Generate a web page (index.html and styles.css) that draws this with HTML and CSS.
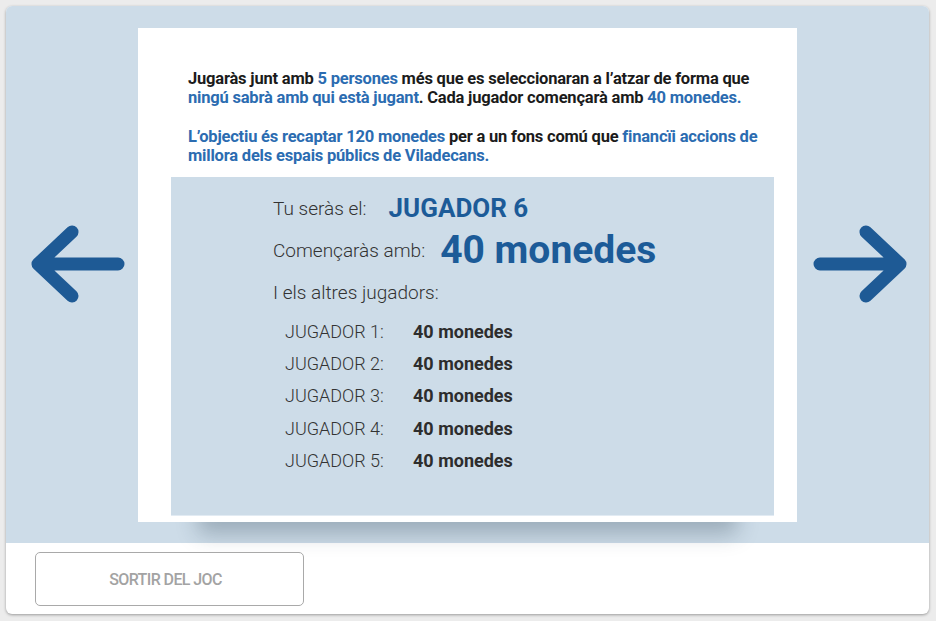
FILE: index.html
```html
<!DOCTYPE html>
<html lang="ca">
<head>
<meta charset="utf-8">
<title>Joc</title>
<link rel="stylesheet" href="styles.css">
</head>
<body>
<div class="card">
  <div class="stage">
    <button class="nav nav-prev" aria-label="Anterior">
      <svg width="104" height="90" viewBox="0 0 104 90"><path d="M12 44 H92 M12 44 L46 12 M12 44 L46 76" fill="none" stroke="#1e5a95" stroke-width="13" stroke-linecap="round" stroke-linejoin="round"/></svg>
    </button>
    <div class="panel">
      <p class="intro">Jugaràs junt amb <span class="hl">5 persones</span> més que es seleccionaran a l’atzar de forma que<br><span class="hl">ningú sabrà amb qui està jugant</span>. Cada jugador començarà amb <span class="hl">40 monedes.</span></p>
      <p class="intro"><span class="hl">L’objectiu és recaptar 120 monedes</span> per a un fons comú que <span class="hl">financïi accions de<br>millora dels espais públics de Viladecans.</span></p>
      <div class="info">
        <div class="line"><span class="lbl">Tu seràs el:</span><span class="player">JUGADOR 6</span></div>
        <div class="line"><span class="lbl">Començaràs amb:</span><span class="coins">40 monedes</span></div>
        <div class="line"><span class="lbl">I els altres jugadors:</span></div>
        <ul class="others">
          <li><span class="who">JUGADOR 1:</span><b>40 monedes</b></li>
          <li><span class="who">JUGADOR 2:</span><b>40 monedes</b></li>
          <li><span class="who">JUGADOR 3:</span><b>40 monedes</b></li>
          <li><span class="who">JUGADOR 4:</span><b>40 monedes</b></li>
          <li><span class="who">JUGADOR 5:</span><b>40 monedes</b></li>
        </ul>
      </div>
    </div>
    <button class="nav nav-next" aria-label="Següent">
      <svg width="104" height="90" viewBox="0 0 104 90"><path d="M92 44 H12 M92 44 L58 12 M92 44 L58 76" fill="none" stroke="#1e5a95" stroke-width="13" stroke-linecap="round" stroke-linejoin="round"/></svg>
    </button>
  </div>
  <div class="footer">
    <button class="exit">SORTIR DEL JOC</button>
  </div>
</div>
</body>
</html>
```
FILE: styles.css
```css
* { box-sizing: border-box; }
html, body { margin: 0; padding: 0; }
body {
  background: #ececec;
  font-family: Roboto, "Noto Sans", sans-serif;
  padding: 6px 7px 7px 6px;
}
.card {
  width: 923px;
  height: 608px;
  background: #fff;
  border-radius: 6px;
  box-shadow: 0 1px 3px rgba(0,0,0,0.35);
  overflow: hidden;
  display: flex;
  flex-direction: column;
}
.stage {
  background: #cddce8;
  height: 537px;
  display: grid;
  grid-template-columns: 1fr 659px 1fr;
  align-items: start;
  padding: 22px 0 0 0;
}
.nav {
  background: none;
  border: 0;
  padding: 0;
  margin-top: 192px;
  cursor: pointer;
  display: block;
  line-height: 0;
}
.nav-prev { justify-self: start; margin-left: 20px; }
.nav-next { justify-self: end; margin-right: 17px; }
.panel {
  width: 659px;
  height: 494px;
  background: #fff;
  padding: 41px 23px 0 33px;
  box-shadow: 0 72px 20px -60px rgba(30,50,70,0.28);
}
.intro {
  margin: 0 0 20px 17px;
  font-size: 16.5px;
  line-height: 19px;
  font-weight: 700;
  color: #1b1b1b;
  letter-spacing: -0.2px;
  white-space: nowrap;
}
.intro + .intro { margin-bottom: 12px; }
.hl { color: #2b6cb1; }
.info {
  background: #cddce8;
  height: 339px;
  padding: 10px 0 0 102px;
  border-bottom: 1px solid #e2ebf3;
  color: #333;
}
.line {
  display: flex;
  align-items: center;
  font-weight: 300;
  font-size: 19px;
  height: 42px;
}
.player {
  color: #1c5b98;
  font-weight: 700;
  font-size: 26px;
  margin-left: 22px;
}
.coins {
  color: #1c5b98;
  font-weight: 700;
  font-size: 39px;
  margin-left: 15px;
}
.others {
  list-style: none;
  margin: 2px 0 0 0;
  padding: 0 0 0 12px;
}
.others li {
  display: flex;
  align-items: center;
  height: 32.4px;
  font-size: 18px;
}
.who { font-weight: 300; width: 128px; }
.others b { font-weight: 700; font-size: 18px; color: #2d2d2d; }
.footer {
  flex: 1;
  padding: 9px 0 0 29px;
}
.exit {
  width: 269px;
  height: 54px;
  background: #fff;
  border: 1px solid #a9a9a9;
  border-radius: 5px;
  font-family: Roboto, sans-serif;
  font-size: 16px;
  font-weight: 500;
  color: #a3a3a3;
  letter-spacing: -0.6px;
  padding: 0 8px 0 0;
  cursor: pointer;
}
```
